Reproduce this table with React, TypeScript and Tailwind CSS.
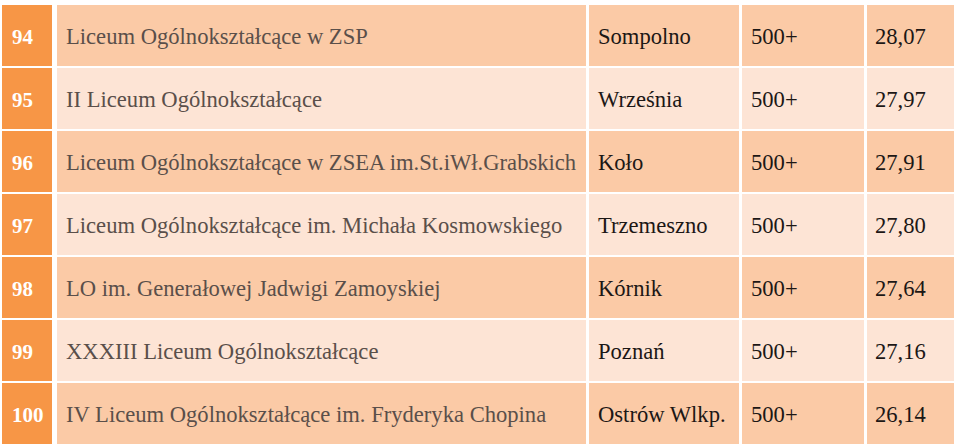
import React from "react";

const rows = [
  ["94", "Liceum Ogólnokształcące w ZSP", "Sompolno", "500+", "28,07"],
  ["95", "II Liceum Ogólnokształcące", "Września", "500+", "27,97"],
  ["96", "Liceum Ogólnokształcące w ZSEA im.St.iWł.Grabskich", "Koło", "500+", "27,91"],
  ["97", "Liceum Ogólnokształcące im. Michała Kosmowskiego", "Trzemeszno", "500+", "27,80"],
  ["98", "LO im. Generałowej Jadwigi Zamoyskiej", "Kórnik", "500+", "27,64"],
  ["99", "XXXIII Liceum Ogólnokształcące", "Poznań", "500+", "27,16"],
  ["100", "IV Liceum Ogólnokształcące im. Fryderyka Chopina", "Ostrów Wlkp.", "500+", "26,14"],
];

export default function App() {
  return (
    <div className="w-[960px] h-[448px] bg-white pt-[5px] pl-[2px] flex flex-col gap-[2.5px] font-['Liberation_Serif','Times_New_Roman',serif]">
      {rows.map((r, i) => {
        const bg = i % 2 === 0 ? "bg-[#fbcaa6]" : "bg-[#fde4d5]";
        return (
          <div key={r[0]} className="flex h-[60.5px] text-[22.6px] leading-none">
            <div className="w-[50px] bg-[#f79646] flex items-center pl-[10px] pt-[5px] text-white font-bold text-[21px]">
              {r[0]}
            </div>
            <div className={`w-[529px] ml-[5px] ${bg} flex items-center pl-[9px] pt-[4px] text-[#5a4f4a] whitespace-nowrap`}>
              {r[1]}
            </div>
            <div className={`w-[150px] ml-[3px] ${bg} flex items-center pl-[9px] pt-[4px] text-[#1c1715] whitespace-nowrap`}>
              {r[2]}
            </div>
            <div className={`w-[122px] ml-[3px] ${bg} flex items-center pl-[9px] pt-[4px] text-[#1c1715]`}>
              {r[3]}
            </div>
            <div className={`w-[87px] ml-[3px] ${bg} flex items-center pl-[8px] pt-[4px] text-[#1c1715]`}>
              {r[4]}
            </div>
          </div>
        );
      })}
    </div>
  );
}
